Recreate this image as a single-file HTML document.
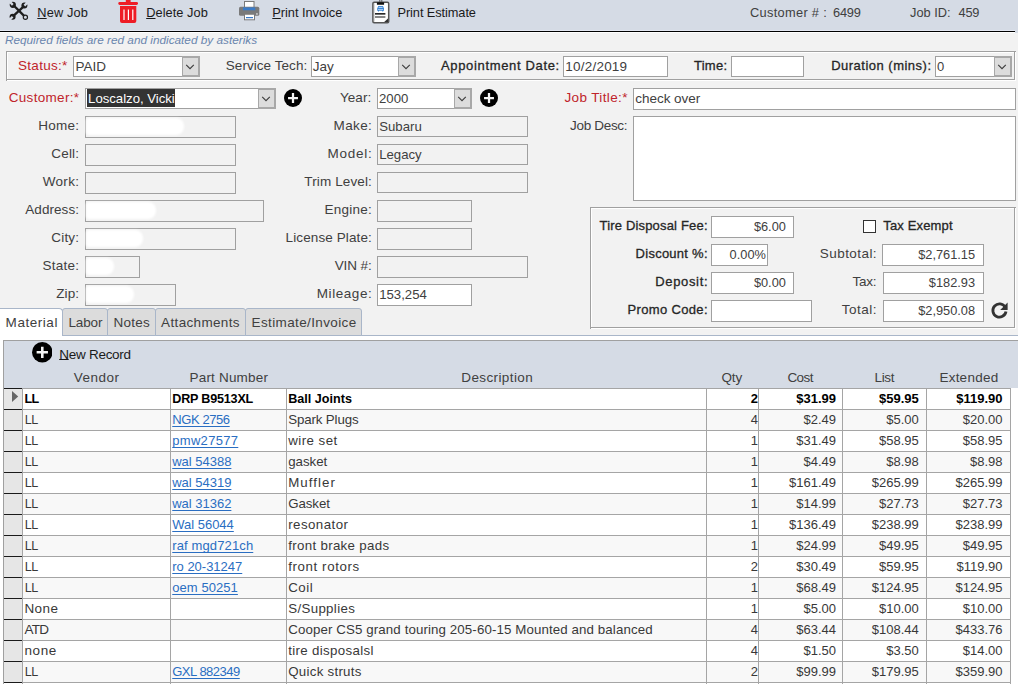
<!DOCTYPE html><html><head><meta charset="utf-8"><style>
html,body{margin:0;padding:0;}
body{width:1018px;height:684px;overflow:hidden;position:relative;background:#F2F2F2;font-family:"Liberation Sans",sans-serif;}
.t{position:absolute;white-space:nowrap;line-height:20px;}
.r{position:absolute;box-sizing:border-box;}
u{text-decoration:underline;text-decoration-thickness:1px;text-underline-offset:2px;text-decoration-skip-ink:none;}
</style></head><body>
<div class="r" style="left:0px;top:0px;width:1018px;height:33px;background:#D5DBE5;"></div>
<div class="r" style="left:0px;top:30px;width:1015px;height:1px;background:#E3E7F1;"></div>
<div class="r" style="left:0px;top:31px;width:1015px;height:1px;background:#000000;"></div>
<div class="r" style="left:0px;top:32px;width:1015px;height:1px;background:#FFFFFF;"></div>
<svg class="r" style="left:0px;top:0px" width="40" height="26" viewBox="0 0 40 26">
<g stroke="#1E1E1E" stroke-linecap="butt">
<line x1="13" y1="4.8" x2="24.6" y2="16.4" stroke-width="2.3"/>
<line x1="24.3" y1="5.8" x2="12.6" y2="16.6" stroke-width="2.3"/>
</g>
<circle cx="12.8" cy="4.8" r="3.1" fill="#1E1E1E"/>
<line x1="12.8" y1="4.8" x2="9.6" y2="1.6" stroke="#D5DBE5" stroke-width="2.4"/>
<circle cx="24.4" cy="5.6" r="3.0" fill="#1E1E1E"/>
<line x1="24.4" y1="5.6" x2="27.6" y2="2.4" stroke="#D5DBE5" stroke-width="2.3"/>
<circle cx="12.6" cy="16.8" r="3.0" fill="#1E1E1E"/>
<line x1="12.6" y1="16.8" x2="9.4" y2="20.0" stroke="#D5DBE5" stroke-width="2.3"/>
<circle cx="25.4" cy="17.3" r="2.1" fill="#D5DBE5" stroke="#1E1E1E" stroke-width="1.2"/>
</svg>
<div class="t" style="left:37.30px;top:3px;font-size:12.800px;color:#1A1A1A;letter-spacing:0.108px;"><u style="text-underline-offset:1px">N</u>ew Job</div>
<svg class="r" style="left:118px;top:0px" width="21" height="24" viewBox="0 0 21 24">
<rect x="7.8" y="0" width="4.8" height="3" fill="#EE1C25"/>
<rect x="0.3" y="1.9" width="19.7" height="3" rx="1.4" fill="#EE1C25"/>
<path d="M2 6.1 H18.3 V21 Q18.3 23 16.3 23 H4 Q2 23 2 21 Z" fill="#EE1C25"/>
<rect x="5.4" y="9.5" width="1.2" height="10.5" fill="#FFFFFF"/>
<rect x="9.8" y="9.5" width="1.2" height="10.5" fill="#FFFFFF"/>
<rect x="14.2" y="9.5" width="1.2" height="10.5" fill="#FFFFFF"/>
</svg>
<div class="t" style="left:146.20px;top:3px;font-size:12.800px;color:#1A1A1A;letter-spacing:0.051px;"><u style="text-underline-offset:1px">D</u>elete Job</div>
<svg class="r" style="left:238px;top:0px" width="22" height="21" viewBox="0 0 22 21">
<rect x="6.5" y="1.5" width="9.5" height="6.5" fill="#FFFFFF" stroke="#7A7A7A" stroke-width="1"/>
<rect x="1" y="6.7" width="20.3" height="9.1" rx="1.5" fill="#7A7A7A"/>
<rect x="5" y="7.4" width="12.3" height="2.9" fill="#3A7BC8"/>
<rect x="6.5" y="14.2" width="10" height="5.6" fill="#FFFFFF" stroke="#7A7A7A" stroke-width="1"/>
<rect x="8" y="17" width="7" height="1.2" fill="#3A7BC8"/>
<rect x="18.3" y="13.3" width="1.3" height="1.3" fill="#FFFFFF"/>
</svg>
<div class="t" style="left:272.30px;top:3px;font-size:12.800px;color:#1A1A1A;letter-spacing:-0.036px;"><u style="text-underline-offset:1px">P</u>rint Invoice</div>
<svg class="r" style="left:372px;top:0px" width="18" height="24" viewBox="0 0 18 24">
<rect x="0.9" y="2.3" width="15.8" height="20.4" rx="1.2" fill="#FFFFFF" stroke="#555" stroke-width="1.5"/>
<rect x="2" y="3.2" width="1" height="18.6" fill="#DDD"/>
<rect x="7.3" y="0" width="1" height="2.5" fill="#555"/><rect x="9.3" y="0" width="1" height="2.5" fill="#555"/>
<rect x="4.9" y="2.3" width="7.2" height="2.5" rx="0.5" fill="#111"/>
<path d="M6.3 6 H11 L11.8 8 H12 V10.8 H11.2 V11.5 H10.2 V10.8 H7 V11.5 H6 V10.8 H5.2 V8 H5.4 Z" fill="#3A86D6"/>
<rect x="6.6" y="6.9" width="4" height="1" fill="#BFD9F5"/>
<rect x="6" y="9.2" width="5.2" height="0.8" fill="#BFD9F5"/>
<rect x="3" y="13.1" width="10.4" height="1.5" fill="#111"/>
<rect x="3" y="16.3" width="10.4" height="1.4" fill="#555"/>
<path d="M12.2 22 L16 18.4 V22 Z" fill="#333"/>
</svg>
<div class="t" style="left:397.50px;top:3px;font-size:12.800px;color:#1A1A1A;letter-spacing:-0.090px;">Print Estimate</div>
<div class="t" style="left:750.00px;top:3px;font-size:12.800px;color:#404040;letter-spacing:0.312px;">Customer # :</div>
<div class="t" style="left:833.00px;top:3px;font-size:12.800px;color:#404040;letter-spacing:-0.209px;">6499</div>
<div class="t" style="left:910.00px;top:3px;font-size:12.800px;color:#404040;letter-spacing:-0.008px;">Job ID:</div>
<div class="t" style="left:958.60px;top:3px;font-size:12.800px;color:#404040;letter-spacing:-0.304px;">459</div>
<div class="t" style="left:4.90px;top:30px;font-size:11.800px;color:#6A86AE;letter-spacing:-0.006px;font-style:italic;">Required fields are red and indicated by asteriks</div>
<div class="r" style="left:6px;top:51px;width:1010px;height:1px;background:#A0A0A0;"></div>
<div class="r" style="left:6px;top:51px;width:1px;height:30px;background:#A0A0A0;"></div>
<div class="r" style="left:7px;top:52px;width:1008px;height:1px;background:#FFFFFF;"></div>
<div class="r" style="left:7px;top:52px;width:1px;height:28px;background:#FFFFFF;"></div>
<div class="r" style="left:7px;top:79px;width:1008px;height:1px;background:#A0A0A0;"></div>
<div class="r" style="left:1014px;top:52px;width:1px;height:28px;background:#A0A0A0;"></div>
<div class="r" style="left:7px;top:80px;width:1009px;height:1px;background:#FFFFFF;"></div>
<div class="r" style="left:1015px;top:52px;width:1px;height:29px;background:#FFFFFF;"></div>
<div class="t" style="right:950.41px;top:56px;font-size:13.500px;color:#C0242B;letter-spacing:0.289px;">Status:*</div>
<div class="r" style="left:73px;top:56px;width:127px;height:21px;background:#FFFFFF;border:1px solid #A0A0A0;"></div>
<div class="r" style="left:182px;top:56px;width:18px;height:21px;background:#DCDCDC;border:2px solid #A8A8A8;border-left-width:1px;"></div>
<svg class="r" style="left:185.0px;top:63.8px" width="10" height="6" viewBox="0 0 10 6"><path d="M1.2 0.9 L5 4.7 L8.8 0.9" fill="none" stroke="#3C3C3C" stroke-width="1.1"/></svg>
<div class="t" style="left:75.40px;top:57px;font-size:13.500px;color:#404040;letter-spacing:0.031px;">PAID</div>
<div class="t" style="right:710.75px;top:56px;font-size:13.500px;color:#404040;letter-spacing:0.051px;">Service Tech:</div>
<div class="r" style="left:311px;top:56px;width:105px;height:21px;background:#FFFFFF;border:1px solid #A0A0A0;"></div>
<div class="r" style="left:398px;top:56px;width:18px;height:21px;background:#DCDCDC;border:2px solid #A8A8A8;border-left-width:1px;"></div>
<svg class="r" style="left:401.0px;top:63.8px" width="10" height="6" viewBox="0 0 10 6"><path d="M1.2 0.9 L5 4.7 L8.8 0.9" fill="none" stroke="#3C3C3C" stroke-width="1.1"/></svg>
<div class="t" style="left:312.80px;top:57px;font-size:13.500px;color:#404040;">Jay</div>
<div class="t" style="right:458.14px;top:56px;font-size:13.000px;color:#262626;letter-spacing:0.658px;-webkit-text-stroke:0.3px #262626;">Appointment Date:</div>
<div class="r" style="left:563px;top:56px;width:105px;height:21px;background:#FFFFFF;border:1px solid #A0A0A0;"></div>
<div class="t" style="left:565.30px;top:57px;font-size:13.500px;color:#404040;letter-spacing:0.218px;">10/2/2019</div>
<div class="t" style="right:290.75px;top:56px;font-size:13.000px;color:#262626;letter-spacing:0.245px;-webkit-text-stroke:0.3px #262626;">Time:</div>
<div class="r" style="left:731px;top:56px;width:73px;height:21px;background:#FFFFFF;border:1px solid #A0A0A0;"></div>
<div class="t" style="right:86.51px;top:56px;font-size:13.000px;color:#262626;letter-spacing:0.492px;-webkit-text-stroke:0.3px #262626;">Duration (mins):</div>
<div class="r" style="left:935px;top:56px;width:77px;height:21px;background:#FFFFFF;border:1px solid #A0A0A0;"></div>
<div class="r" style="left:994px;top:56px;width:18px;height:21px;background:#DCDCDC;border:2px solid #A8A8A8;border-left-width:1px;"></div>
<svg class="r" style="left:997.0px;top:63.8px" width="10" height="6" viewBox="0 0 10 6"><path d="M1.2 0.9 L5 4.7 L8.8 0.9" fill="none" stroke="#3C3C3C" stroke-width="1.1"/></svg>
<div class="t" style="left:937.00px;top:57px;font-size:13.000px;color:#404040;">0</div>
<div class="t" style="right:938.70px;top:88px;font-size:13.500px;color:#C0242B;letter-spacing:0.303px;">Customer:*</div>
<div class="r" style="left:85px;top:88px;width:191px;height:21px;background:#FFFFFF;border:1px solid #A0A0A0;"></div>
<div class="r" style="left:258px;top:88px;width:18px;height:21px;background:#DCDCDC;border:2px solid #A8A8A8;border-left-width:1px;"></div>
<svg class="r" style="left:261.0px;top:95.8px" width="10" height="6" viewBox="0 0 10 6"><path d="M1.2 0.9 L5 4.7 L8.8 0.9" fill="none" stroke="#3C3C3C" stroke-width="1.1"/></svg>
<div class="r" style="left:87px;top:89px;width:88px;height:18px;background:#333333;"></div>
<div class="t" style="left:88.10px;top:89px;font-size:13.200px;color:#FFFFFF;letter-spacing:-0.026px;">Loscalzo, Vicki</div>
<svg class="r" style="left:283.90px;top:89.40px" width="18" height="18" viewBox="0 0 20 20"><circle cx="10" cy="10" r="10" fill="#000"/><path d="M10 4.5V15.5M4.5 10H15.5" stroke="#F4F4F4" stroke-width="2.5"/></svg>
<div class="t" style="right:646.76px;top:88px;font-size:13.500px;color:#404040;letter-spacing:0.043px;">Year:</div>
<div class="r" style="left:377px;top:88px;width:95px;height:21px;background:#FFFFFF;border:1px solid #A0A0A0;"></div>
<div class="r" style="left:454px;top:88px;width:18px;height:21px;background:#DCDCDC;border:2px solid #A8A8A8;border-left-width:1px;"></div>
<svg class="r" style="left:457.0px;top:95.8px" width="10" height="6" viewBox="0 0 10 6"><path d="M1.2 0.9 L5 4.7 L8.8 0.9" fill="none" stroke="#3C3C3C" stroke-width="1.1"/></svg>
<div class="t" style="left:379.00px;top:89px;font-size:13.200px;color:#404040;">2000</div>
<svg class="r" style="left:480.00px;top:89.40px" width="18" height="18" viewBox="0 0 20 20"><circle cx="10" cy="10" r="10" fill="#000"/><path d="M10 4.5V15.5M4.5 10H15.5" stroke="#F4F4F4" stroke-width="2.5"/></svg>
<div class="t" style="right:390.12px;top:88px;font-size:13.500px;color:#C0242B;letter-spacing:0.382px;">Job Title:*</div>
<div class="r" style="left:633px;top:88px;width:383px;height:22px;background:#FFFFFF;border:1px solid #A0A0A0;"></div>
<div class="t" style="left:635.30px;top:89px;font-size:13.500px;color:#404040;letter-spacing:-0.042px;">check over</div>
<div class="t" style="right:938.74px;top:116px;font-size:13.500px;color:#404040;letter-spacing:0.260px;">Home:</div>
<div class="r" style="left:85px;top:116px;width:151px;height:22px;background:#F2F2F2;border:1px solid #A0A0A0;"></div>
<div class="r" style="left:86px;top:118px;width:98px;height:17px;background:#FFFFFF;border-radius:3px 8px 8px 3px;filter:blur(0.8px)"></div>
<div class="t" style="right:938.81px;top:144px;font-size:13.500px;color:#404040;letter-spacing:0.185px;">Cell:</div>
<div class="r" style="left:85px;top:144px;width:151px;height:22px;background:#F2F2F2;border:1px solid #A0A0A0;"></div>
<div class="t" style="right:938.66px;top:172px;font-size:13.500px;color:#404040;letter-spacing:0.337px;">Work:</div>
<div class="r" style="left:85px;top:172px;width:151px;height:22px;background:#F2F2F2;border:1px solid #A0A0A0;"></div>
<div class="t" style="right:938.93px;top:200px;font-size:13.500px;color:#404040;letter-spacing:0.068px;">Address:</div>
<div class="r" style="left:85px;top:200px;width:179px;height:22px;background:#F2F2F2;border:1px solid #A0A0A0;"></div>
<div class="r" style="left:86px;top:202px;width:70px;height:17px;background:#FFFFFF;border-radius:3px 8px 8px 3px;filter:blur(0.8px)"></div>
<div class="t" style="right:938.81px;top:228px;font-size:13.500px;color:#404040;letter-spacing:0.187px;">City:</div>
<div class="r" style="left:85px;top:228px;width:151px;height:22px;background:#F2F2F2;border:1px solid #A0A0A0;"></div>
<div class="r" style="left:86px;top:230px;width:57px;height:17px;background:#FFFFFF;border-radius:3px 8px 8px 3px;filter:blur(0.8px)"></div>
<div class="t" style="right:938.77px;top:256px;font-size:13.500px;color:#404040;letter-spacing:0.225px;">State:</div>
<div class="r" style="left:85px;top:256px;width:55px;height:22px;background:#F2F2F2;border:1px solid #A0A0A0;"></div>
<div class="r" style="left:86px;top:258px;width:28px;height:17px;background:#FFFFFF;border-radius:3px 8px 8px 3px;filter:blur(0.8px)"></div>
<div class="t" style="right:938.93px;top:284px;font-size:13.500px;color:#404040;letter-spacing:0.065px;">Zip:</div>
<div class="r" style="left:85px;top:284px;width:91px;height:22px;background:#F2F2F2;border:1px solid #A0A0A0;"></div>
<div class="r" style="left:86px;top:286px;width:48px;height:17px;background:#FFFFFF;border-radius:3px 8px 8px 3px;filter:blur(0.8px)"></div>
<div class="t" style="right:645.83px;top:116px;font-size:13.500px;color:#404040;letter-spacing:0.371px;">Make:</div>
<div class="r" style="left:377px;top:116px;width:151px;height:21px;background:#F2F2F2;border:1px solid #A0A0A0;"></div>
<div class="t" style="left:379.20px;top:117px;font-size:13.200px;color:#404040;">Subaru</div>
<div class="t" style="right:645.45px;top:144px;font-size:13.500px;color:#404040;letter-spacing:0.746px;">Model:</div>
<div class="r" style="left:377px;top:144px;width:151px;height:21px;background:#F2F2F2;border:1px solid #A0A0A0;"></div>
<div class="t" style="left:379.20px;top:145px;font-size:13.200px;color:#404040;">Legacy</div>
<div class="t" style="right:646.08px;top:172px;font-size:13.500px;color:#404040;letter-spacing:0.124px;">Trim Level:</div>
<div class="r" style="left:377px;top:172px;width:151px;height:21px;background:#F2F2F2;border:1px solid #A0A0A0;"></div>
<div class="t" style="right:645.96px;top:200px;font-size:13.500px;color:#404040;letter-spacing:0.244px;">Engine:</div>
<div class="r" style="left:377px;top:200px;width:95px;height:22px;background:#F2F2F2;border:1px solid #A0A0A0;"></div>
<div class="t" style="right:646.09px;top:228px;font-size:13.500px;color:#404040;letter-spacing:0.111px;">License Plate:</div>
<div class="r" style="left:377px;top:228px;width:95px;height:22px;background:#F2F2F2;border:1px solid #A0A0A0;"></div>
<div class="t" style="right:646.27px;top:256px;font-size:13.500px;color:#404040;letter-spacing:-0.073px;">VIN #:</div>
<div class="r" style="left:377px;top:256px;width:151px;height:22px;background:#F2F2F2;border:1px solid #A0A0A0;"></div>
<div class="t" style="right:645.63px;top:284px;font-size:13.500px;color:#404040;letter-spacing:0.575px;">Mileage:</div>
<div class="r" style="left:377px;top:284px;width:95px;height:22px;background:#FFFFFF;border:1px solid #A0A0A0;"></div>
<div class="t" style="left:379.20px;top:285px;font-size:13.200px;color:#404040;">153,254</div>
<div class="t" style="right:390.82px;top:116px;font-size:13.500px;color:#404040;letter-spacing:-0.316px;">Job Desc:</div>
<div class="r" style="left:633px;top:116px;width:383px;height:85px;background:#FFFFFF;border:1px solid #A0A0A0;"></div>
<div class="r" style="left:590px;top:207px;width:426px;height:1px;background:#A0A0A0;"></div>
<div class="r" style="left:590px;top:207px;width:1px;height:122px;background:#A0A0A0;"></div>
<div class="r" style="left:591px;top:208px;width:424px;height:1px;background:#FFFFFF;"></div>
<div class="r" style="left:591px;top:208px;width:1px;height:120px;background:#FFFFFF;"></div>
<div class="r" style="left:591px;top:327px;width:424px;height:1px;background:#A0A0A0;"></div>
<div class="r" style="left:1014px;top:208px;width:1px;height:120px;background:#A0A0A0;"></div>
<div class="r" style="left:591px;top:328px;width:425px;height:1px;background:#FFFFFF;"></div>
<div class="r" style="left:1015px;top:208px;width:1px;height:121px;background:#FFFFFF;"></div>
<div class="t" style="right:310.32px;top:216px;font-size:13.000px;color:#262626;letter-spacing:0.177px;-webkit-text-stroke:0.3px #262626;">Tire Disposal Fee:</div>
<div class="r" style="left:711px;top:216px;width:83px;height:22px;background:#FFFFFF;border:1px solid #A0A0A0;"></div>
<div class="t" style="right:232.10px;top:217px;font-size:12.800px;color:#404040;">$6.00</div>
<div class="t" style="right:310.25px;top:244px;font-size:13.000px;color:#262626;letter-spacing:0.254px;-webkit-text-stroke:0.3px #262626;">Discount %:</div>
<div class="r" style="left:711px;top:244px;width:57px;height:22px;background:#FFFFFF;border:1px solid #A0A0A0;"></div>
<div class="t" style="right:252.10px;top:245px;font-size:12.800px;color:#404040;">0.00%</div>
<div class="t" style="right:309.86px;top:272px;font-size:13.000px;color:#262626;letter-spacing:0.637px;-webkit-text-stroke:0.3px #262626;">Deposit:</div>
<div class="r" style="left:711px;top:272px;width:83px;height:22px;background:#FFFFFF;border:1px solid #A0A0A0;"></div>
<div class="t" style="right:232.10px;top:273px;font-size:12.800px;color:#404040;">$0.00</div>
<div class="t" style="right:310.17px;top:300px;font-size:13.000px;color:#262626;letter-spacing:0.331px;-webkit-text-stroke:0.3px #262626;">Promo Code:</div>
<div class="r" style="left:711px;top:300px;width:101px;height:22px;background:#FFFFFF;border:1px solid #A0A0A0;"></div>
<div class="r" style="left:863px;top:220px;width:13px;height:13px;background:#FFFFFF;border:1px solid #333333;"></div>
<div class="t" style="left:883.30px;top:216px;font-size:13.000px;color:#262626;letter-spacing:0.148px;-webkit-text-stroke:0.3px #262626;">Tax Exempt</div>
<div class="t" style="right:140.96px;top:244px;font-size:13.500px;color:#404040;letter-spacing:0.439px;">Subtotal:</div>
<div class="r" style="left:882px;top:244px;width:102px;height:22px;background:#FFFFFF;border:1px solid #A0A0A0;"></div>
<div class="t" style="right:42.90px;top:245px;font-size:12.800px;color:#404040;">$2,761.15</div>
<div class="t" style="right:141.65px;top:272px;font-size:13.500px;color:#404040;letter-spacing:-0.253px;">Tax:</div>
<div class="r" style="left:883px;top:272px;width:101px;height:22px;background:#FFFFFF;border:1px solid #A0A0A0;"></div>
<div class="t" style="right:42.90px;top:273px;font-size:12.800px;color:#404040;">$182.93</div>
<div class="t" style="right:140.88px;top:300px;font-size:13.500px;color:#404040;letter-spacing:0.517px;">Total:</div>
<div class="r" style="left:883px;top:300px;width:101px;height:22px;background:#FFFFFF;border:1px solid #A0A0A0;"></div>
<div class="t" style="right:42.90px;top:301px;font-size:12.800px;color:#404040;">$2,950.08</div>
<svg class="r" style="left:990px;top:301px" width="19" height="19" viewBox="0 0 19 19">
<path d="M15.2 6.2 A6.6 6.6 0 1 0 16 10.5" fill="none" stroke="#333" stroke-width="2.8"/>
<path d="M17.6 1.6 V9 H10.2 Z" fill="#333"/>
</svg>
<div class="r" style="left:62px;top:335px;width:956px;height:1px;background:#A9B6C9;"></div>
<div class="r" style="left:0px;top:336px;width:1018px;height:4px;background:#FFFFFF;"></div>
<div class="r" style="left:62px;top:308px;width:46px;height:28px;background:#DCDCDC;border:1px solid #A9B6C9;border-radius:3px 3px 0 0;"></div>
<div class="r" style="left:107px;top:308px;width:49px;height:28px;background:#DCDCDC;border:1px solid #A9B6C9;border-radius:3px 3px 0 0;"></div>
<div class="r" style="left:155px;top:308px;width:91px;height:28px;background:#DCDCDC;border:1px solid #A9B6C9;border-radius:3px 3px 0 0;"></div>
<div class="r" style="left:245px;top:308px;width:117px;height:28px;background:#DCDCDC;border:1px solid #A9B6C9;border-radius:3px 3px 0 0;"></div>
<div class="r" style="left:0px;top:308px;width:63px;height:28px;background:#FFFFFF;border:1px solid #A9B6C9;border-bottom:none;border-left:none;border-radius:0 4px 0 0;"></div>
<div class="t" style="left:5.60px;top:313px;font-size:13.500px;color:#404040;letter-spacing:0.541px;">Material</div>
<div class="t" style="left:68.50px;top:313px;font-size:13.500px;color:#404040;letter-spacing:-0.157px;">Labor</div>
<div class="t" style="left:113.50px;top:313px;font-size:13.500px;color:#404040;letter-spacing:0.246px;">Notes</div>
<div class="t" style="left:161.10px;top:313px;font-size:13.500px;color:#404040;letter-spacing:0.342px;">Attachments</div>
<div class="t" style="left:251.50px;top:313px;font-size:13.500px;color:#404040;letter-spacing:0.380px;">Estimate/Invoice</div>
<div class="r" style="left:0px;top:336px;width:3px;height:348px;background:#FFFFFF;"></div>
<div class="r" style="left:3px;top:340px;width:1015px;height:344px;background:#FFFFFF;"></div>
<div class="r" style="left:3px;top:340px;width:1015px;height:1px;background:#A0A0A0;"></div>
<div class="r" style="left:3px;top:340px;width:1px;height:344px;background:#A0A0A0;"></div>
<div class="r" style="left:4px;top:341px;width:1014px;height:47px;background:#D5DBE5;"></div>
<svg class="r" style="left:31.70px;top:342.20px" width="20.6" height="20.6" viewBox="0 0 20 20"><circle cx="10" cy="10" r="10" fill="#000"/><path d="M10 4.5V15.5M4.5 10H15.5" stroke="#F4F4F4" stroke-width="2.5"/></svg>
<div class="t" style="left:59.20px;top:345px;font-size:13.500px;color:#1A1A1A;letter-spacing:-0.264px;"><u style="text-underline-offset:0px">N</u>ew Record</div>
<div class="t" style="left:73.70px;top:368px;font-size:13.500px;color:#404040;letter-spacing:0.492px;">Vendor</div>
<div class="t" style="left:189.50px;top:368px;font-size:13.500px;color:#404040;letter-spacing:0.192px;">Part Number</div>
<div class="t" style="left:461.30px;top:368px;font-size:13.500px;color:#404040;letter-spacing:0.387px;">Description</div>
<div class="t" style="left:721.40px;top:368px;font-size:13.500px;color:#404040;letter-spacing:-0.077px;">Qty</div>
<div class="t" style="left:787.40px;top:368px;font-size:13.500px;color:#404040;letter-spacing:-0.586px;">Cost</div>
<div class="t" style="left:874.50px;top:368px;font-size:13.500px;color:#404040;letter-spacing:-0.336px;">List</div>
<div class="t" style="left:939.40px;top:368px;font-size:13.500px;color:#404040;letter-spacing:0.243px;">Extended</div>
<div class="r" style="left:23px;top:389px;width:987px;height:20px;background:#FFFFFF;"></div>
<div class="r" style="left:4px;top:389px;width:18px;height:20px;background:#E6E6E6;"></div>
<div class="r" style="left:23px;top:410px;width:987px;height:20px;background:#F8F8F8;"></div>
<div class="r" style="left:4px;top:410px;width:18px;height:20px;background:#E6E6E6;"></div>
<div class="r" style="left:23px;top:431px;width:987px;height:20px;background:#FFFFFF;"></div>
<div class="r" style="left:4px;top:431px;width:18px;height:20px;background:#E6E6E6;"></div>
<div class="r" style="left:23px;top:452px;width:987px;height:20px;background:#F8F8F8;"></div>
<div class="r" style="left:4px;top:452px;width:18px;height:20px;background:#E6E6E6;"></div>
<div class="r" style="left:23px;top:473px;width:987px;height:20px;background:#FFFFFF;"></div>
<div class="r" style="left:4px;top:473px;width:18px;height:20px;background:#E6E6E6;"></div>
<div class="r" style="left:23px;top:494px;width:987px;height:20px;background:#F8F8F8;"></div>
<div class="r" style="left:4px;top:494px;width:18px;height:20px;background:#E6E6E6;"></div>
<div class="r" style="left:23px;top:515px;width:987px;height:20px;background:#FFFFFF;"></div>
<div class="r" style="left:4px;top:515px;width:18px;height:20px;background:#E6E6E6;"></div>
<div class="r" style="left:23px;top:536px;width:987px;height:20px;background:#F8F8F8;"></div>
<div class="r" style="left:4px;top:536px;width:18px;height:20px;background:#E6E6E6;"></div>
<div class="r" style="left:23px;top:557px;width:987px;height:20px;background:#FFFFFF;"></div>
<div class="r" style="left:4px;top:557px;width:18px;height:20px;background:#E6E6E6;"></div>
<div class="r" style="left:23px;top:578px;width:987px;height:20px;background:#F8F8F8;"></div>
<div class="r" style="left:4px;top:578px;width:18px;height:20px;background:#E6E6E6;"></div>
<div class="r" style="left:23px;top:599px;width:987px;height:20px;background:#FFFFFF;"></div>
<div class="r" style="left:4px;top:599px;width:18px;height:20px;background:#E6E6E6;"></div>
<div class="r" style="left:23px;top:620px;width:987px;height:20px;background:#F8F8F8;"></div>
<div class="r" style="left:4px;top:620px;width:18px;height:20px;background:#E6E6E6;"></div>
<div class="r" style="left:23px;top:641px;width:987px;height:20px;background:#FFFFFF;"></div>
<div class="r" style="left:4px;top:641px;width:18px;height:20px;background:#E6E6E6;"></div>
<div class="r" style="left:23px;top:662px;width:987px;height:20px;background:#F8F8F8;"></div>
<div class="r" style="left:4px;top:662px;width:18px;height:20px;background:#E6E6E6;"></div>
<div class="r" style="left:22px;top:388px;width:989px;height:1px;background:#A5A5A5;"></div>
<div class="r" style="left:4px;top:388px;width:18px;height:1px;background:#1A1A1A;"></div>
<div class="r" style="left:22px;top:409px;width:989px;height:1px;background:#A5A5A5;"></div>
<div class="r" style="left:4px;top:409px;width:18px;height:1px;background:#1A1A1A;"></div>
<div class="r" style="left:22px;top:430px;width:989px;height:1px;background:#A5A5A5;"></div>
<div class="r" style="left:4px;top:430px;width:18px;height:1px;background:#1A1A1A;"></div>
<div class="r" style="left:22px;top:451px;width:989px;height:1px;background:#A5A5A5;"></div>
<div class="r" style="left:4px;top:451px;width:18px;height:1px;background:#1A1A1A;"></div>
<div class="r" style="left:22px;top:472px;width:989px;height:1px;background:#A5A5A5;"></div>
<div class="r" style="left:4px;top:472px;width:18px;height:1px;background:#1A1A1A;"></div>
<div class="r" style="left:22px;top:493px;width:989px;height:1px;background:#A5A5A5;"></div>
<div class="r" style="left:4px;top:493px;width:18px;height:1px;background:#1A1A1A;"></div>
<div class="r" style="left:22px;top:514px;width:989px;height:1px;background:#A5A5A5;"></div>
<div class="r" style="left:4px;top:514px;width:18px;height:1px;background:#1A1A1A;"></div>
<div class="r" style="left:22px;top:535px;width:989px;height:1px;background:#A5A5A5;"></div>
<div class="r" style="left:4px;top:535px;width:18px;height:1px;background:#1A1A1A;"></div>
<div class="r" style="left:22px;top:556px;width:989px;height:1px;background:#A5A5A5;"></div>
<div class="r" style="left:4px;top:556px;width:18px;height:1px;background:#1A1A1A;"></div>
<div class="r" style="left:22px;top:577px;width:989px;height:1px;background:#A5A5A5;"></div>
<div class="r" style="left:4px;top:577px;width:18px;height:1px;background:#1A1A1A;"></div>
<div class="r" style="left:22px;top:598px;width:989px;height:1px;background:#A5A5A5;"></div>
<div class="r" style="left:4px;top:598px;width:18px;height:1px;background:#1A1A1A;"></div>
<div class="r" style="left:22px;top:619px;width:989px;height:1px;background:#A5A5A5;"></div>
<div class="r" style="left:4px;top:619px;width:18px;height:1px;background:#1A1A1A;"></div>
<div class="r" style="left:22px;top:640px;width:989px;height:1px;background:#A5A5A5;"></div>
<div class="r" style="left:4px;top:640px;width:18px;height:1px;background:#1A1A1A;"></div>
<div class="r" style="left:22px;top:661px;width:989px;height:1px;background:#A5A5A5;"></div>
<div class="r" style="left:4px;top:661px;width:18px;height:1px;background:#1A1A1A;"></div>
<div class="r" style="left:22px;top:682px;width:989px;height:1px;background:#A5A5A5;"></div>
<div class="r" style="left:4px;top:682px;width:18px;height:1px;background:#1A1A1A;"></div>
<div class="r" style="left:22px;top:388px;width:1px;height:296px;background:#A5A5A5;"></div>
<div class="r" style="left:170px;top:388px;width:1px;height:296px;background:#A5A5A5;"></div>
<div class="r" style="left:286px;top:388px;width:1px;height:296px;background:#A5A5A5;"></div>
<div class="r" style="left:706px;top:388px;width:1px;height:296px;background:#A5A5A5;"></div>
<div class="r" style="left:758px;top:388px;width:1px;height:296px;background:#A5A5A5;"></div>
<div class="r" style="left:842px;top:388px;width:1px;height:296px;background:#A5A5A5;"></div>
<div class="r" style="left:926px;top:388px;width:1px;height:296px;background:#A5A5A5;"></div>
<div class="r" style="left:1010px;top:388px;width:1px;height:296px;background:#A5A5A5;"></div>
<svg class="r" style="left:12px;top:391px" width="7" height="11" viewBox="0 0 7 11"><path d="M0 0 L6.2 5.5 L0 11 Z" fill="#666"/></svg>
<div class="t" style="left:24.50px;top:389px;font-size:12.600px;color:#000000;font-weight:700;letter-spacing:-0.8px;">LL</div>
<div class="t" style="left:172.25px;top:389px;font-size:12.600px;color:#000;font-weight:700;letter-spacing:-0.2px;">DRP B9513XL</div>
<div class="t" style="left:288.25px;top:389px;font-size:12.600px;color:#000000;font-weight:700;">Ball Joints</div>
<div class="t" style="right:260.00px;top:389px;font-size:13.000px;color:#000000;font-weight:700;">2</div>
<div class="t" style="right:182.00px;top:389px;font-size:13.000px;color:#000000;font-weight:700;">$31.99</div>
<div class="t" style="right:99.25px;top:389px;font-size:13.000px;color:#000000;font-weight:700;">$59.95</div>
<div class="t" style="right:15.50px;top:389px;font-size:13.000px;color:#000000;font-weight:700;">$119.90</div>
<div class="t" style="left:24.70px;top:410px;font-size:12.600px;color:#383838;letter-spacing:-0.4px;">LL</div>
<div class="t" style="left:172.25px;top:410px;font-size:13.000px;color:#2A6EC2;letter-spacing:-0.408px;"><u>NGK 2756</u></div>
<div class="t" style="left:288.25px;top:410px;font-size:13.300px;color:#383838;letter-spacing:-0.136px;">Spark Plugs</div>
<div class="t" style="right:260.00px;top:410px;font-size:13.000px;color:#383838;">4</div>
<div class="t" style="right:182.00px;top:410px;font-size:13.000px;color:#383838;">$2.49</div>
<div class="t" style="right:99.25px;top:410px;font-size:13.000px;color:#383838;">$5.00</div>
<div class="t" style="right:15.50px;top:410px;font-size:13.000px;color:#383838;">$20.00</div>
<div class="t" style="left:24.70px;top:431px;font-size:12.600px;color:#383838;letter-spacing:-0.4px;">LL</div>
<div class="t" style="left:172.25px;top:431px;font-size:13.000px;color:#2A6EC2;letter-spacing:0.304px;"><u>pmw27577</u></div>
<div class="t" style="left:288.25px;top:431px;font-size:13.300px;color:#383838;letter-spacing:0.447px;">wire set</div>
<div class="t" style="right:260.00px;top:431px;font-size:13.000px;color:#383838;">1</div>
<div class="t" style="right:182.00px;top:431px;font-size:13.000px;color:#383838;">$31.49</div>
<div class="t" style="right:99.25px;top:431px;font-size:13.000px;color:#383838;">$58.95</div>
<div class="t" style="right:15.50px;top:431px;font-size:13.000px;color:#383838;">$58.95</div>
<div class="t" style="left:24.70px;top:452px;font-size:12.600px;color:#383838;letter-spacing:-0.4px;">LL</div>
<div class="t" style="left:172.25px;top:452px;font-size:13.000px;color:#2A6EC2;letter-spacing:-0.015px;"><u>wal 54388</u></div>
<div class="t" style="left:288.25px;top:452px;font-size:13.300px;color:#383838;letter-spacing:-0.047px;">gasket</div>
<div class="t" style="right:260.00px;top:452px;font-size:13.000px;color:#383838;">1</div>
<div class="t" style="right:182.00px;top:452px;font-size:13.000px;color:#383838;">$4.49</div>
<div class="t" style="right:99.25px;top:452px;font-size:13.000px;color:#383838;">$8.98</div>
<div class="t" style="right:15.50px;top:452px;font-size:13.000px;color:#383838;">$8.98</div>
<div class="t" style="left:24.70px;top:473px;font-size:12.600px;color:#383838;letter-spacing:-0.4px;">LL</div>
<div class="t" style="left:172.25px;top:473px;font-size:13.000px;color:#2A6EC2;letter-spacing:-0.015px;"><u>wal 54319</u></div>
<div class="t" style="left:288.25px;top:473px;font-size:13.300px;color:#383838;letter-spacing:1.040px;">Muffler</div>
<div class="t" style="right:260.00px;top:473px;font-size:13.000px;color:#383838;">1</div>
<div class="t" style="right:182.00px;top:473px;font-size:13.000px;color:#383838;">$161.49</div>
<div class="t" style="right:99.25px;top:473px;font-size:13.000px;color:#383838;">$265.99</div>
<div class="t" style="right:15.50px;top:473px;font-size:13.000px;color:#383838;">$265.99</div>
<div class="t" style="left:24.70px;top:494px;font-size:12.600px;color:#383838;letter-spacing:-0.4px;">LL</div>
<div class="t" style="left:172.25px;top:494px;font-size:13.000px;color:#2A6EC2;letter-spacing:-0.015px;"><u>wal 31362</u></div>
<div class="t" style="left:288.25px;top:494px;font-size:13.300px;color:#383838;letter-spacing:-0.097px;">Gasket</div>
<div class="t" style="right:260.00px;top:494px;font-size:13.000px;color:#383838;">1</div>
<div class="t" style="right:182.00px;top:494px;font-size:13.000px;color:#383838;">$14.99</div>
<div class="t" style="right:99.25px;top:494px;font-size:13.000px;color:#383838;">$27.73</div>
<div class="t" style="right:15.50px;top:494px;font-size:13.000px;color:#383838;">$27.73</div>
<div class="t" style="left:24.70px;top:515px;font-size:12.600px;color:#383838;letter-spacing:-0.4px;">LL</div>
<div class="t" style="left:172.25px;top:515px;font-size:13.000px;color:#2A6EC2;letter-spacing:-0.012px;"><u>Wal 56044</u></div>
<div class="t" style="left:288.25px;top:515px;font-size:13.300px;color:#383838;letter-spacing:0.433px;">resonator</div>
<div class="t" style="right:260.00px;top:515px;font-size:13.000px;color:#383838;">1</div>
<div class="t" style="right:182.00px;top:515px;font-size:13.000px;color:#383838;">$136.49</div>
<div class="t" style="right:99.25px;top:515px;font-size:13.000px;color:#383838;">$238.99</div>
<div class="t" style="right:15.50px;top:515px;font-size:13.000px;color:#383838;">$238.99</div>
<div class="t" style="left:24.70px;top:536px;font-size:12.600px;color:#383838;letter-spacing:-0.4px;">LL</div>
<div class="t" style="left:172.25px;top:536px;font-size:13.000px;color:#2A6EC2;letter-spacing:0.126px;"><u>raf mgd721ch</u></div>
<div class="t" style="left:288.25px;top:536px;font-size:13.300px;color:#383838;letter-spacing:0.316px;">front brake pads</div>
<div class="t" style="right:260.00px;top:536px;font-size:13.000px;color:#383838;">1</div>
<div class="t" style="right:182.00px;top:536px;font-size:13.000px;color:#383838;">$24.99</div>
<div class="t" style="right:99.25px;top:536px;font-size:13.000px;color:#383838;">$49.95</div>
<div class="t" style="right:15.50px;top:536px;font-size:13.000px;color:#383838;">$49.95</div>
<div class="t" style="left:24.70px;top:557px;font-size:12.600px;color:#383838;letter-spacing:-0.4px;">LL</div>
<div class="t" style="left:172.25px;top:557px;font-size:13.000px;color:#2A6EC2;letter-spacing:-0.011px;"><u>ro 20-31247</u></div>
<div class="t" style="left:288.25px;top:557px;font-size:13.300px;color:#383838;letter-spacing:0.595px;">front rotors</div>
<div class="t" style="right:260.00px;top:557px;font-size:13.000px;color:#383838;">2</div>
<div class="t" style="right:182.00px;top:557px;font-size:13.000px;color:#383838;">$30.49</div>
<div class="t" style="right:99.25px;top:557px;font-size:13.000px;color:#383838;">$59.95</div>
<div class="t" style="right:15.50px;top:557px;font-size:13.000px;color:#383838;">$119.90</div>
<div class="t" style="left:24.70px;top:578px;font-size:12.600px;color:#383838;letter-spacing:-0.4px;">LL</div>
<div class="t" style="left:172.25px;top:578px;font-size:13.000px;color:#2A6EC2;letter-spacing:0.066px;"><u>oem 50251</u></div>
<div class="t" style="left:288.25px;top:578px;font-size:13.300px;color:#383838;letter-spacing:0.496px;">Coil</div>
<div class="t" style="right:260.00px;top:578px;font-size:13.000px;color:#383838;">1</div>
<div class="t" style="right:182.00px;top:578px;font-size:13.000px;color:#383838;">$68.49</div>
<div class="t" style="right:99.25px;top:578px;font-size:13.000px;color:#383838;">$124.95</div>
<div class="t" style="right:15.50px;top:578px;font-size:13.000px;color:#383838;">$124.95</div>
<div class="t" style="left:24.40px;top:599px;font-size:13.500px;color:#383838;letter-spacing:0.476px;">None</div>
<div class="t" style="left:288.25px;top:599px;font-size:13.300px;color:#383838;letter-spacing:0.330px;">S/Supplies</div>
<div class="t" style="right:260.00px;top:599px;font-size:13.000px;color:#383838;">1</div>
<div class="t" style="right:182.00px;top:599px;font-size:13.000px;color:#383838;">$5.00</div>
<div class="t" style="right:99.25px;top:599px;font-size:13.000px;color:#383838;">$10.00</div>
<div class="t" style="right:15.50px;top:599px;font-size:13.000px;color:#383838;">$10.00</div>
<div class="t" style="left:24.40px;top:620px;font-size:13.500px;color:#383838;letter-spacing:-0.674px;">ATD</div>
<div class="t" style="left:288.25px;top:620px;font-size:13.300px;color:#383838;letter-spacing:0.107px;">Cooper CS5 grand touring 205-60-15 Mounted and balanced</div>
<div class="t" style="right:260.00px;top:620px;font-size:13.000px;color:#383838;">4</div>
<div class="t" style="right:182.00px;top:620px;font-size:13.000px;color:#383838;">$63.44</div>
<div class="t" style="right:99.25px;top:620px;font-size:13.000px;color:#383838;">$108.44</div>
<div class="t" style="right:15.50px;top:620px;font-size:13.000px;color:#383838;">$433.76</div>
<div class="t" style="left:24.40px;top:641px;font-size:13.500px;color:#383838;letter-spacing:0.639px;">none</div>
<div class="t" style="left:288.25px;top:641px;font-size:13.300px;color:#383838;letter-spacing:0.336px;">tire disposalsl</div>
<div class="t" style="right:260.00px;top:641px;font-size:13.000px;color:#383838;">4</div>
<div class="t" style="right:182.00px;top:641px;font-size:13.000px;color:#383838;">$1.50</div>
<div class="t" style="right:99.25px;top:641px;font-size:13.000px;color:#383838;">$3.50</div>
<div class="t" style="right:15.50px;top:641px;font-size:13.000px;color:#383838;">$14.00</div>
<div class="t" style="left:24.70px;top:662px;font-size:12.600px;color:#383838;letter-spacing:-0.4px;">LL</div>
<div class="t" style="left:172.25px;top:662px;font-size:13.000px;color:#2A6EC2;letter-spacing:-0.503px;"><u>GXL 882349</u></div>
<div class="t" style="left:288.25px;top:662px;font-size:13.300px;color:#383838;letter-spacing:0.265px;">Quick struts</div>
<div class="t" style="right:260.00px;top:662px;font-size:13.000px;color:#383838;">2</div>
<div class="t" style="right:182.00px;top:662px;font-size:13.000px;color:#383838;">$99.99</div>
<div class="t" style="right:99.25px;top:662px;font-size:13.000px;color:#383838;">$179.95</div>
<div class="t" style="right:15.50px;top:662px;font-size:13.000px;color:#383838;">$359.90</div>
</body></html>
